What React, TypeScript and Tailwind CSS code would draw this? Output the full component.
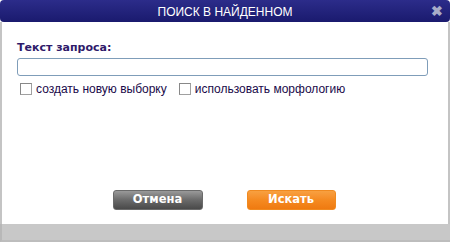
import React from "react";

export default function App() {
  return (
    <div className="w-[450px] h-[242px] bg-white relative overflow-hidden" style={{ fontFamily: '"DejaVu Sans", sans-serif' }}>
      <div className="flex flex-col h-full">
        <div className="h-[22px] rounded-[4px] bg-gradient-to-b from-[#2c2c8a] to-[#1a1a6e] flex items-center justify-center relative">
          <span className="text-white text-[12px] pt-[1px]" style={{ fontFamily: '"Liberation Sans", sans-serif' }}>ПОИСК В НАЙДЕННОМ</span>
          <span className="absolute right-[7px] top-[4px] text-[#a8acc8] text-[14px] font-bold leading-none" style={{ fontFamily: '"Liberation Sans", sans-serif' }}>✖</span>
        </div>
        <div className="flex-1 flex flex-col border-l-2 border-r-2 border-[#c4c4c4] bg-white">
          <div className="pl-[15px] pr-[20px] pt-[19px] flex flex-col">
            <div className="text-[11px] font-bold text-[#2e1a6a] leading-[13px]">Текст запроса:</div>
            <div className="mt-[4px] h-[18px] border border-[#7f9db9] rounded-[3px] bg-white" />
            <div className="flex items-center mt-[6px] text-[12px] text-[#1a0a4a] leading-[14px]" style={{ fontFamily: '"Liberation Sans", sans-serif' }}>
              <span className="w-[12px] h-[12px] border border-[#a0a0a0] border-t-[#888] border-l-[#888] bg-white ml-[3px] mr-[4px]" />
              <span>создать новую выборку</span>
              <span className="w-[12px] h-[12px] border border-[#a0a0a0] border-t-[#888] border-l-[#888] bg-white ml-[12px] mr-[4px]" />
              <span>использовать морфологию</span>
            </div>
          </div>
          <div className="flex-1" />
          <div className="flex justify-center gap-[44px] pb-[14px] pr-[2px]">
            <div className="w-[90px] h-[20px] rounded-[3px] border border-[#6a6a6a] bg-gradient-to-b from-[#9a9a9a] via-[#6a6a6a] to-[#4a4a4a] flex items-center justify-center text-white text-[11.5px] font-bold">Отмена</div>
            <div className="w-[89px] h-[20px] rounded-[3px] border border-[#f08a20] bg-gradient-to-b from-[#f8a040] via-[#f58a20] to-[#ef7a10] flex items-center justify-center text-white text-[11.5px] font-bold">Искать</div>
          </div>
        </div>
        <div className="h-[18px] bg-[#c8c8c8] border-l-2 border-[#b8b8b8] border-b-2 border-b-[#bdbdbd]" />
      </div>
    </div>
  );
}
